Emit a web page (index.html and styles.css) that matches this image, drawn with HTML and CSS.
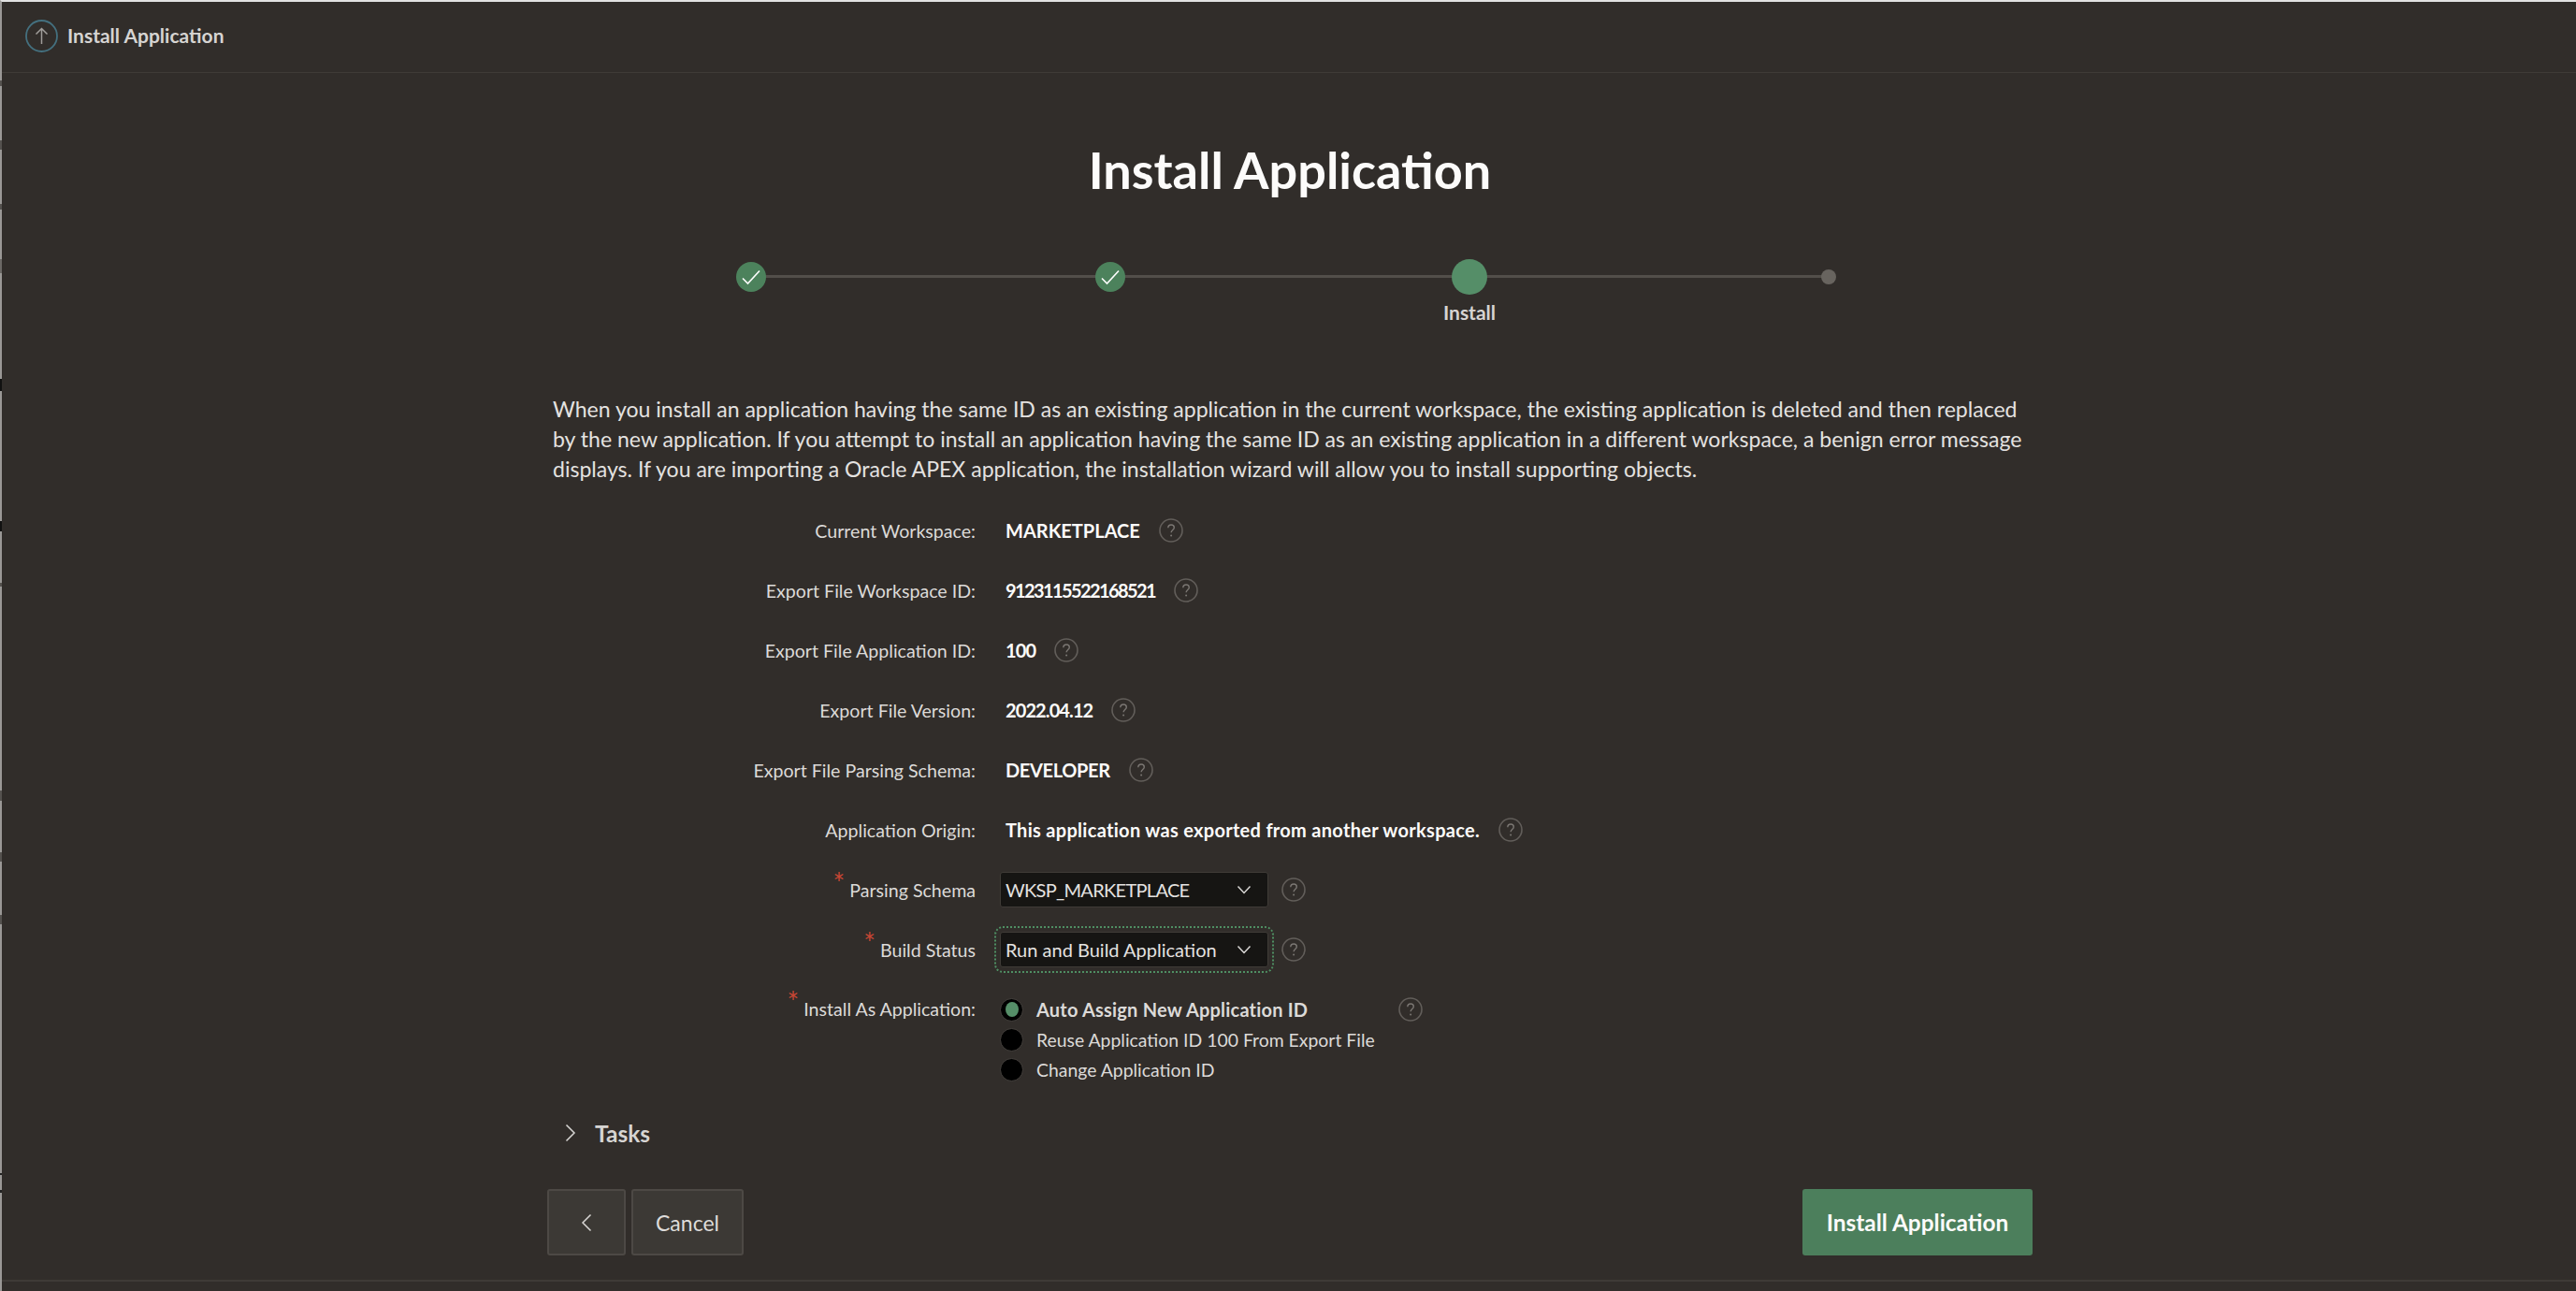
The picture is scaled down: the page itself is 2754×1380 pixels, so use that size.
FILE: index.html
```html
<!DOCTYPE html>
<html lang="en">
<head>
<meta charset="utf-8">
<title>Install Application</title>
<link rel="stylesheet" href="styles.css">
</head>
<body>
<svg class="defs" width="0" height="0" aria-hidden="true">
  <symbol id="help" viewBox="0 0 26 26">
    <circle cx="13" cy="13" r="12" fill="none" stroke="#625e5a" stroke-width="1.6"/>
    <path d="M9.8 10.2c0-2 1.4-3.2 3.3-3.2s3.2 1.2 3.2 2.9c0 2.6-3.2 2.6-3.2 5.4" fill="none" stroke="#7b7773" stroke-width="1.4"/>
    <circle cx="13.1" cy="18.6" r="1" fill="#7b7773"/>
  </symbol>
  <symbol id="chev-down" viewBox="0 0 16 10">
    <path d="M1.5 1.5 8 8.5l6.500-7" fill="none" stroke="#d8d6d4" stroke-width="1.500"/>
  </symbol>
</svg>
<header class="topbar">
  <svg class="topbar-icon" viewBox="0 0 35 35" aria-hidden="true">
    <circle cx="17.500" cy="17.500" r="16.500" fill="none" stroke="#44707f" stroke-width="1.800"/>
    <path d="M17.500 26V9.500M11.500 15.500l6-6 6 6" fill="none" stroke="#a09d9a" stroke-width="1.500"/>
  </svg>
  <span class="topbar-title">Install Application</span>
</header>
<main class="wizard">
  <h1 class="wizard-title">Install Application</h1>
  <ol class="steps">
    <li class="step step-done">
      <span class="dot-wrap"><span class="dot"><svg viewBox="0 0 32 32" width="32" height="32" aria-hidden="true"><path d="M7 17.500l5.500 5.500L25 9.500" fill="none" stroke="#fff" stroke-width="1.600"/></svg></span></span>
    </li>
    <li class="step step-done">
      <span class="dot-wrap"><span class="dot"><svg viewBox="0 0 32 32" width="32" height="32" aria-hidden="true"><path d="M7 17.500l5.500 5.500L25 9.500" fill="none" stroke="#fff" stroke-width="1.600"/></svg></span></span>
    </li>
    <li class="step step-current">
      <span class="dot-wrap"><span class="dot"></span></span>
      <span class="step-label">Install</span>
    </li>
    <li class="step step-todo">
      <span class="dot-wrap"><span class="dot"></span></span>
    </li>
  </ol>
  <p class="intro">When you install an application having the same ID as an existing application in the current workspace, the existing application is deleted and then replaced by the new application. If you attempt to install an application having the same ID as an existing application in a different workspace, a benign error message displays. If you are importing a Oracle APEX application, the installation wizard will allow you to install supporting objects.</p>
  <div class="form">
    <div class="row"><span class="label">Current Workspace:</span><div class="value"><strong>MARKETPLACE</strong><svg class="help"><use href="#help"/></svg></div></div>
    <div class="row"><span class="label">Export File Workspace ID:</span><div class="value"><strong class="digits-long">9123115522168521</strong><svg class="help"><use href="#help"/></svg></div></div>
    <div class="row"><span class="label">Export File Application ID:</span><div class="value"><strong class="digits-short">100</strong><svg class="help"><use href="#help"/></svg></div></div>
    <div class="row"><span class="label">Export File Version:</span><div class="value"><strong class="digits-short">2022.04.12</strong><svg class="help"><use href="#help"/></svg></div></div>
    <div class="row"><span class="label">Export File Parsing Schema:</span><div class="value"><strong class="tight">DEVELOPER</strong><svg class="help"><use href="#help"/></svg></div></div>
    <div class="row"><span class="label">Application Origin:</span><div class="value"><strong class="wide">This application was exported from another workspace.</strong><svg class="help"><use href="#help"/></svg></div></div>
    <div class="row"><span class="label"><span class="req">*</span>Parsing Schema</span><div class="value value-field"><div class="select"><span class="tighter">WKSP_MARKETPLACE</span><svg class="chev"><use href="#chev-down"/></svg></div><svg class="help help-field"><use href="#help"/></svg></div></div>
    <div class="row"><span class="label"><span class="req">*</span>Build Status</span><div class="value value-field"><div class="select select-focus"><span>Run and Build Application</span><svg class="chev"><use href="#chev-down"/></svg></div><svg class="help help-field"><use href="#help"/></svg></div></div>
    <div class="row row-radios">
      <span class="label"><span class="req">*</span>Install As Application:</span>
      <div class="value-radios">
        <div class="radios">
          <div class="radio radio-on"><span class="radio-mark"></span><span>Auto Assign New Application ID</span></div>
          <div class="radio"><span class="radio-mark"></span><span>Reuse Application ID 100 From Export File</span></div>
          <div class="radio"><span class="radio-mark"></span><span>Change Application ID</span></div>
        </div>
        <svg class="help help-radio"><use href="#help"/></svg>
      </div>
    </div>
  </div>
  <div class="tasks">
    <svg class="tasks-chev" viewBox="0 0 12 20" aria-hidden="true"><path d="M1.500 1.500 10 10l-8.500 8.500" fill="none" stroke="#d8d6d4" stroke-width="1.500"/></svg>
    <span>Tasks</span>
  </div>
  <div class="actions">
    <div class="actions-left">
      <button class="btn btn-back" type="button" aria-label="Back"><svg viewBox="0 0 12 20" width="12" height="20" aria-hidden="true"><path d="M10.500 1.500 2 10l8.500 8.500" fill="none" stroke="#d8d6d4" stroke-width="1.500"/></svg></button>
      <button class="btn" type="button">Cancel</button>
    </div>
    <button class="btn btn-primary" type="button">Install Application</button>
  </div>
</main>
<div class="footer-rule"></div>
</body>
</html>
```

FILE: styles.css
```css
* { box-sizing: border-box; }
html, body { height: 100%; }
body {
  margin: 0;
  height: 1380px;
  overflow: hidden;
  background: #312d2a;
  border-top: 2px solid #e2e2e2;
  border-left: 2px solid #9a9896;
  color: #d6d4d2;
  font-family: Lato, "Noto Sans", sans-serif;
  font-size: 20px;
}
/* fragments of the window behind, showing along the left edge */
body::before {
  content: "";
  position: absolute;
  left: 0;
  top: 0;
  width: 2px;
  height: 1380px;
  background: linear-gradient(to bottom,
    transparent 0 86px, #55524f 86px 92px, transparent 92px 150px,
    #55524f 150px 160px, transparent 160px 218px, #55524f 218px 224px,
    transparent 224px 277px, #6b6865 277px 292px, transparent 292px 405px,
    #111 405px 418px, transparent 418px 557px, #111 557px 568px,
    transparent 568px 623px, #55524f 623px 627px, transparent 627px 845px,
    #55524f 845px 856px, transparent 856px 911px, #55524f 911px 921px,
    transparent 921px 978px, #55524f 978px 988px, transparent 988px 1254px,
    #222 1254px 1256px, transparent 1256px 1272px, #222 1272px 1275px, transparent 1275px);
}
.defs { position: absolute; }

.topbar {
  display: flex;
  align-items: center;
  gap: 10px;
  height: 76px;
  padding: 0 0 3px 25px;
  border-bottom: 1px solid #3f3b37;
}
.topbar-icon { width: 35px; height: 35px; }
.topbar-title { padding-bottom: 2px; font-size: 21px; font-weight: 700; color: #d6d4d2; }

.wizard { width: 1588px; margin: 0 0 0 583px; }
.wizard-title {
  margin: 74px 0 0;
  font-size: 54px;
  line-height: 60px;
  font-weight: 700;
  text-align: center;
  color: #fcfbfa;
}

.steps {
  display: grid;
  grid-template-columns: repeat(4, 384px);
  justify-content: center;
  list-style: none;
  margin: 65px 0 0;
  padding: 0;
  height: 69px;
}
.step { position: relative; display: flex; flex-direction: column; align-items: center; }
.step:not(:last-child)::after {
  content: "";
  position: absolute;
  left: 50%;
  width: 100%;
  top: 17px;
  height: 3px;
  background: #524e4a;
}
.dot-wrap { position: relative; z-index: 1; display: flex; align-items: center; justify-content: center; height: 38px; }
.dot { display: block; border-radius: 50%; }
.dot svg { display: block; }
.step-done .dot { width: 32px; height: 32px; background: #4c825c; }
.step-current .dot { width: 38px; height: 38px; background: #558e68; }
.step-todo .dot { width: 16px; height: 16px; background: #68645f; }
.step-label { margin-top: 7px; font-size: 21px; line-height: 24px; font-weight: 700; color: #d6d4d2; }

.intro {
  margin: 75px 0 0;
  padding: 0 6px;
  font-size: 23.05px;
  line-height: 32px;
  color: #e4e2e0;
}

.form { margin-top: 18px; }
.row {
  display: grid;
  grid-template-columns: 458px 1fr;
  column-gap: 26px;
  align-items: center;
  height: 64px;
  font-size: 20px;
}
.label { text-align: right; font-size: 19.6px; color: #dcdad8; white-space: nowrap; }
.req { color: #c74634; font-size: 30px; line-height: 0; vertical-align: 4px; margin-right: 5px; }
.value { display: flex; align-items: center; gap: 20px; padding-left: 6px; }
.value strong { font-weight: 700; color: #fcfbfa; }
.digits-long { letter-spacing: -1.6px; }
.digits-short { letter-spacing: -0.9px; }
.tight { letter-spacing: -0.35px; }
.tighter { letter-spacing: -0.7px; }
.wide { letter-spacing: 0.3px; }
.help { display: block; width: 26px; height: 26px; flex: none; }
.value-field { padding-left: 0; gap: 14px; }
.select {
  display: flex;
  align-items: center;
  justify-content: space-between;
  width: 287px;
  height: 38px;
  padding: 0 17px 0 5px;
  background: #161513;
  border: 1px solid #3f3b37;
  border-radius: 3px;
  color: #e4e2e0;
}
.select-focus { outline: 2px dotted #4f8f63; outline-offset: 4px; }
.chev { width: 16px; height: 10px; flex: none; }

.row-radios { align-items: start; height: 128px; padding-top: 16px; }
.row-radios .label { line-height: 32px; }
.value-radios { display: flex; align-items: flex-start; }
.radios { width: 426px; }
.radio { display: flex; align-items: center; gap: 14px; height: 32px; font-size: 19.4px; color: #dcdad8; white-space: nowrap; }
.radio-on { font-weight: 700; font-size: 20px; letter-spacing: 0.2px; }
.radio-mark {
  display: flex;
  flex: none;
  align-items: center;
  justify-content: center;
  width: 25px;
  height: 25px;
  background: #000;
  border: 1px solid #45413d;
  border-radius: 50%;
}
.radio-on .radio-mark::before {
  content: "";
  width: 14px;
  height: 16px;
  border-radius: 50%;
  background: #558e68;
}
.help-radio { margin: 3px 0 0 0; }

.tasks {
  display: flex;
  align-items: center;
  gap: 20px;
  height: 30px;
  margin-top: 21px;
  padding-left: 19px;
  font-size: 24.5px;
  font-weight: 700;
  color: #d6d4d2;
}
.tasks-chev { width: 12px; height: 20px; }

.actions { display: flex; justify-content: space-between; margin-top: 45px; }
.actions-left { display: flex; gap: 6px; }
.btn {
  height: 71px;
  padding: 0 24px;
  background: #3c3935;
  border: 2px solid #4d4945;
  border-radius: 3px;
  color: #dedcda;
  font: 400 23px Lato, "Noto Sans", sans-serif;
}
.btn-back { display: flex; align-items: center; justify-content: center; width: 84px; padding: 0; }
.btn-primary { width: 246px; padding: 0; background: #4c7f5c; border: 0; color: #fcfbfa; font-size: 24.4px; font-weight: 700; }

.footer-rule { margin-top: 26px; height: 2px; background: #3f3b37; }
```
